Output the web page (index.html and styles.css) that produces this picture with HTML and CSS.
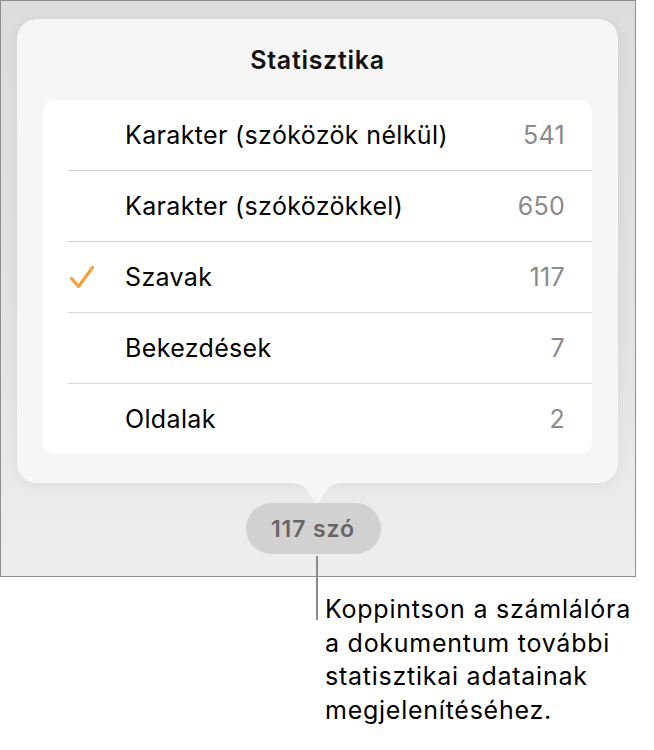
FILE: index.html
```html
<!DOCTYPE html>
<html lang="hu">
<head>
<meta charset="utf-8">
<title>Statisztika</title>
<link rel="stylesheet" href="styles.css">
</head>
<body>
<div class="figure">
  <div class="frame">
    <div class="panel">
      <h1 class="title">Statisztika</h1>
      <ul class="card">
        <li class="row"><span class="check"></span><span class="label">Karakter (szóközök nélkül)</span><span class="value">541</span></li>
        <li class="row"><span class="check"></span><span class="label">Karakter (szóközökkel)</span><span class="value">650</span></li>
        <li class="row"><span class="check"><svg width="26" height="24" viewBox="0 0 26 24"><path d="M2.5 13.5 L9.5 21.5 L23.5 2.5" fill="none" stroke="#f4a03b" stroke-width="3.2" stroke-linecap="round" stroke-linejoin="round"/></svg></span><span class="label">Szavak</span><span class="value">117</span></li>
        <li class="row"><span class="check"></span><span class="label">Bekezdések</span><span class="value">7</span></li>
        <li class="row"><span class="check"></span><span class="label">Oldalak</span><span class="value">2</span></li>
      </ul>
      <svg class="arrow" width="52" height="21" viewBox="0 0 52 21"><path d="M0 0 Q11 0 16 7 L24.5 19.5 Q26 21 27.5 19.5 L36 7 Q41 0 52 0 Z" fill="#f6f6f6"/></svg>
    </div>
    <div class="pillrow"><div class="pill">117 szó</div></div>
  </div>
  <div class="leader"></div>
  <p class="caption">Koppintson a számlálóra<br>a dokumentum további<br>statisztikai adatainak<br>megjelenítéséhez.</p>
</div>
</body>
</html>
```
FILE: styles.css
```css
* { box-sizing: border-box; }
html, body { margin: 0; padding: 0; background: #ffffff; }
body { font-family: "Inter", "Roboto", "Liberation Sans", sans-serif; color: #000; }

.figure { position: relative; width: 654px; height: 750px; }

.frame {
  width: 636px;
  height: 577px;
  border: 1px solid #8f8f8f;
  background: linear-gradient(180deg, #dcdcdc 0%, #e3e3e3 60%, #eeeeee 100%);
  padding: 18px 17px 0 16px;
}

.panel {
  position: relative;
  height: 464px;
  background: #f6f6f6;
  border-radius: 20px;
  padding: 0 26px 0 26px;
  box-shadow: 0 2px 14px rgba(0,0,0,0.06);
}

.title {
  margin: 0;
  height: 81px;
  padding-top: 26px;
  text-align: center;
  font-size: 25px;
  font-weight: 600;
  letter-spacing: 0.7px;
  line-height: 30px;
  color: #111;
}

.card {
  list-style: none;
  margin: 0;
  padding: 0;
  background: #ffffff;
  border-radius: 12px;
  overflow: hidden;
}

.row {
  display: flex;
  align-items: center;
  height: 71px;
  margin-left: 25px;
  padding-right: 27px;
  border-top: 1px solid #d4d4d6;
}
.row:first-child { border-top: none; height: 70px; }

.check { width: 57px; height: 24px; display: flex; align-items: center; }
.check svg { display: block; margin-left: 1px; }

.label { flex: 1; font-size: 25px; letter-spacing: 0.35px; color: #000; }
.value { font-size: 25px; letter-spacing: 0.3px; color: #8a8a8e; }

.arrow { position: absolute; left: 274px; top: 464px; display: block; }

.pillrow { display: flex; justify-content: center; margin-top: 20px; padding-right: 9px; }
.pill {
  width: 135px;
  height: 51px;
  border-radius: 26px;
  background: #d1d1d1;
  color: #676767;
  font-size: 23px;
  font-weight: 600;
  letter-spacing: 0.9px;
  display: flex;
  align-items: center;
  justify-content: center;
}

.leader {
  position: absolute;
  left: 316px;
  top: 556px;
  width: 2px;
  height: 64px;
  background: #8c8c8c;
}

.caption {
  margin: 0;
  padding: 16px 0 0 325px;
  font-size: 25px;
  line-height: 33.5px;
  color: #000;
  letter-spacing: 0.75px;
}
```
